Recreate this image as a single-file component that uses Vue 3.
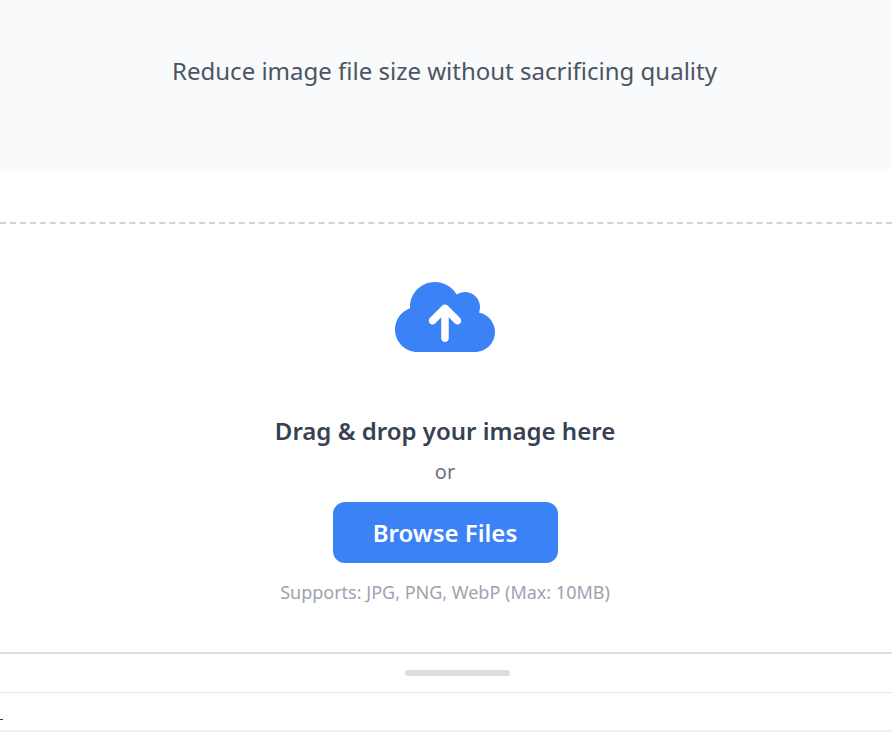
<script setup>
const title = 'Reduce image file size without sacrificing quality'
</script>

<template>
  <div class="page">
    <header class="hero">
      <p class="subtitle">{{ title }}</p>
    </header>
    <section class="upload">
      <svg class="cloud" viewBox="0 0 640 512" aria-hidden="true">
        <path fill="#3b82f6" d="M144 480C64.5 480 0 415.5 0 336c0-62.8 40.2-116.2 96.2-135.9c-.1-2.7-.2-5.4-.2-8.1c0-88.4 71.6-160 160-160c59.3 0 111 32.2 138.7 80.2C409.9 102 428.3 96 448 96c53 0 96 43 96 96c0 12.2-2.3 23.8-6.4 34.6C596 238.4 640 290.1 640 352c0 70.7-57.3 128-128 128H144zm79-217c-9.4 9.4-9.4 24.6 0 33.9s24.6 9.4 33.9 0l39-39V392c0 13.3 10.7 24 24 24s24-10.7 24-24V257.9l39 39c9.4 9.4 24.6 9.4 33.9 0s9.4-24.6 0-33.9l-80-80c-9.4-9.4-24.6-9.4-33.9 0l-80 80z"/>
      </svg>
      <h2 class="drop">Drag &amp; drop your image here</h2>
      <p class="or">or</p>
      <button class="browse" type="button">Browse Files</button>
      <p class="supports">Supports: JPG, PNG, WebP (Max: 10MB)</p>
    </section>
    <div class="handle-row"><span class="handle"></span></div>
    <div class="strip"><span class="tick"></span></div>
  </div>
</template>

<style>
html, body { margin: 0; background: #fff; overflow: hidden; }
</style>

<style scoped>
.page {
  width: 892px;
  height: 734px;
  overflow: hidden;
  font-family: "Noto Sans", "Open Sans", sans-serif;
  background: #fff;
}
.hero {
  height: 169px;
  background: #f9fafb;
  box-sizing: border-box;
  padding-top: 53px;
  padding-right: 3px;
}
.subtitle {
  margin: 0;
  text-align: center;
  font-size: 24px;
  line-height: 36px;
  color: #4b5563;
}
.upload {
  margin-top: 53px;
  height: 430px;
  box-sizing: border-box;
  border-top: 2px dashed #cbd5e1;
  padding-right: 2px;
  padding-top: 53px;
  display: flex;
  flex-direction: column;
  align-items: center;
}
.cloud {
  width: 100px;
  height: 80px;
  display: block;
}
.drop {
  margin: 56px 0 0;
  font-size: 24px;
  line-height: 36px;
  font-weight: 600;
  color: #374151;
}
.or {
  margin: 8px 0 0;
  font-size: 20px;
  line-height: 30px;
  color: #6b7280;
}
.browse {
  margin-top: 15px;
  width: 225px;
  height: 61px;
  border: 0;
  border-radius: 12px;
  background: #3b82f6;
  color: #fff;
  font-family: inherit;
  font-size: 24px;
  font-weight: 600;
}
.supports {
  margin: 16px 0 0;
  font-size: 18px;
  line-height: 27px;
  color: #9ca3af;
}
.handle-row {
  height: 41px;
  box-sizing: border-box;
  border-top: 2px solid #dddddd;
  border-bottom: 1px solid #e5e5e5;
  display: flex;
  align-items: center;
  justify-content: center;
  padding-left: 22px;
}
.handle {
  width: 105px;
  height: 6px;
  border-radius: 3px;
  background: #dddddd;
}
.strip {
  height: 39px;
  box-sizing: border-box;
  border-bottom: 2px solid #f0f0f0;
  position: relative;
}
.tick {
  position: absolute;
  left: 0;
  top: 26px;
  width: 3px;
  height: 1px;
  background: #1e3a8a;
}
</style>
